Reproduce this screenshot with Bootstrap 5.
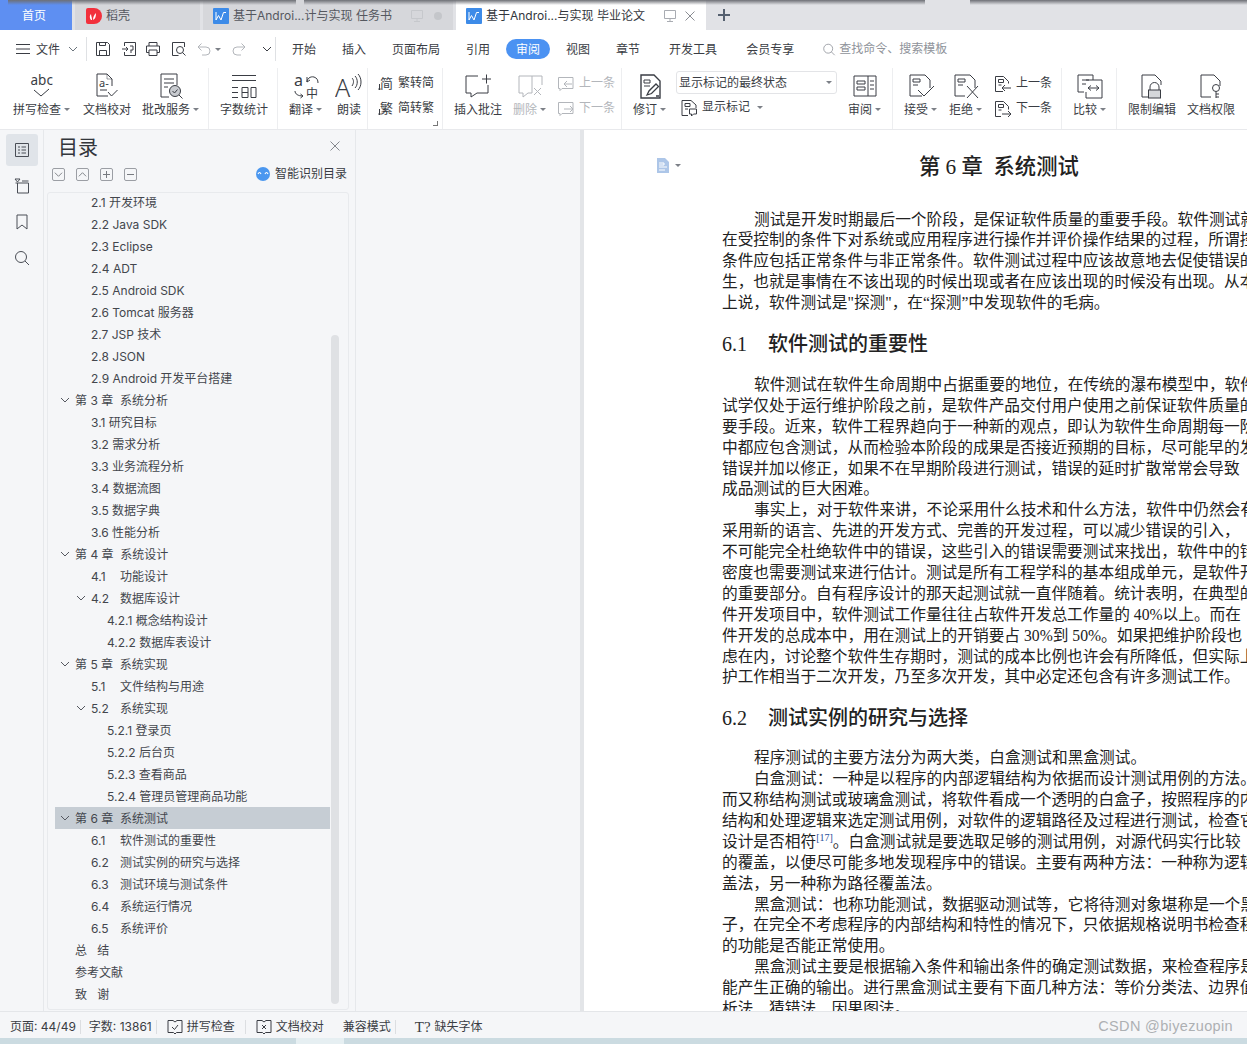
<!doctype html>
<html lang="zh-CN">
<head>
<meta charset="utf-8">
<title>WPS</title>
<link href="https://cdn.jsdelivr.net/npm/bootstrap@5.3.0/dist/css/bootstrap.min.css" rel="stylesheet">
<style>
html,body{height:1044px;overflow:hidden;margin:0}
body{width:1247px;font-family:"Inter","Noto Sans CJK SC",sans-serif;font-size:12px;color:#3a3d44;background:#f5f6f8;line-height:1.2}
svg{display:block;flex:none;fill:none;stroke:currentColor;stroke-width:1}
svg text{stroke:none;fill:currentColor;font-family:"Noto Sans","Noto Sans CJK SC",sans-serif}
.tabbar{height:30px;background:#e1e2e6;position:relative}
.tshade{position:absolute;top:0;height:5px;background:linear-gradient(#6e7076,rgba(110,112,118,0))}
.sh1{left:8px;width:288px}.sh2{left:304px;width:621px}.sh3{left:970px;width:277px}
.wtab{height:30px;flex:none;gap:4px;color:#55585f;background:#d6d7db;padding-left:10px;padding-top:2px}
.wtab.home{width:72px;background:#5e8ff2;color:#fff;padding-left:22px;margin-right:3px}
.wtab.shell{width:125px;padding-left:11px;margin-right:3px}
.wtab.docx{width:250px;margin-right:3px}
.wtab.on{background:#fff;color:#33363c}
.tname{width:161px;white-space:nowrap}
.tmon{margin-left:12px;color:#c6c8cc}
.wtab.on .tmon{color:#a9acb2}
.tx{margin-left:4px;color:#8a8d93}
.tdot{margin-left:6px;width:8px;height:8px;border-radius:50%;background:#c4c6ca}
.tplus{margin-left:9px;color:#55606f}
.menubar{height:38px;background:#fff;color:#3a3d44}
.mi{flex:none}
.vsep{width:1px;height:24px;background:#dfe1e4;flex:none}
.mtab{flex:none;line-height:20px;padding-top:2px}
.pill{width:44px;height:20px;border-radius:10px;background:#4b92f2;color:#fff;text-align:center;flex:none;line-height:21px}
.qsearch{color:#8f939a;padding-top:1px}
.qtext{padding-left:3px}
.ribbon{height:62px;background:#fff;border-bottom:1px solid #e8e9ec}
.rgrp{height:61px;border-right:1px solid #edeef0;flex:none;position:relative}
.g1{width:209px}.g2{width:69px}.g3{width:90px}.g4{width:75px}.g5{width:179px}.g6{width:271px}.g7{width:169px}.g8{width:55px}.g9{width:130px;border-right:0}
.ritem{flex:none;display:flex;flex-direction:column;align-items:center;height:61px}
.ritem svg{margin-top:5px;height:27px;width:28px}
.rlab{margin-top:2px;line-height:15px;white-space:nowrap;display:flex;align-items:center}
.caret{width:0;height:0;border-left:3px solid transparent;border-right:3px solid transparent;border-top:3px solid #7c8087;margin-left:3px;display:inline-block}
.off{color:#b3b6bb}
.rcol{flex:none;display:flex;flex-direction:column;padding-top:3px}
.rrow{height:25px;display:flex;align-items:center;gap:4px;white-space:nowrap}
.m3{margin-left:3px}.m6{margin-left:6px}.m8{margin-left:8px}.m9{margin-left:9px}.m10{margin-left:10px}.m11{margin-left:11px}.m12{margin-left:12px}.m13{margin-left:13px}.m15{margin-left:15px}
.launch{position:absolute;right:4px;bottom:3px;width:5px;height:5px;border-right:1px solid #777;border-bottom:1px solid #777}
.combo{width:161px;height:23px;border:1px solid #e3e4e7;border-radius:3px;padding-left:2px;margin-bottom:1px;line-height:21px;position:relative}
.combo .caret{position:absolute;right:4px;top:9px;margin:0}
.mainarea{height:881px}
.rail{width:44px;flex:none;border-right:1px solid #e6e8eb;padding-top:4px}
.rbtn{width:32px;height:32px;border-radius:3px;margin:0 auto 4px;display:flex;align-items:center;justify-content:center;color:#4a4e56}
.rbtn.on{background:#e0e4e9}
.tocpane{width:312px;flex:none;border-right:1px solid #e6e8eb;position:relative}
.tochead{height:37px;padding-left:14px;font-size:20px;line-height:36px;color:#33363c}
.tclose{left:286px;top:11px;color:#85888e}
.toctools{height:15px;margin-bottom:10px;padding-left:8px;gap:11px}
.tbtn{width:13px;height:13px;border:1px solid #9b9ea4;border-radius:2px;display:flex;align-items:center;justify-content:center;color:#777a80;flex:none}
.aiico{margin-left:auto;gap:5px;padding-right:8px;color:#3a3d44}
.tocbox{margin-left:3px;width:302px;height:818px;border:1px solid #e8eaed;border-radius:3px;position:relative;overflow:hidden}
.tocclip{margin-top:4px;height:810px;overflow:hidden;padding-left:7px}
.toclist{margin-top:-6px;width:275px}
.trow{height:22px;display:flex;align-items:center;white-space:nowrap;color:#43464d;padding-top:2px}
.trow.sel{background:#c6cdd4}
.l2{padding-left:36px}.l3{padding-left:52px}.l0{padding-left:20px}
.tog{width:20px;flex:none;display:flex;padding-left:5px;color:#555860;margin-top:-2px}
.tog2{padding-left:21px;width:36px}
.num{width:29px;flex:none}
.scrollb{position:absolute;left:283px;top:142px;width:8px;height:669px;border-radius:4px;background:#dfe1e4}
.gapzone{width:224px;flex:none;background:#f5f6f8}
.gut{width:4px;background:#e3e5e8;flex:none}
.page{width:663px;flex:none;background:#fff;overflow:hidden;padding-left:138px;position:relative;height:881px}
.docico{position:absolute;left:72px;top:28px;color:#adc6e8}
.docico .caret{position:absolute;left:19px;top:6px;margin:0}
.doct{font-family:"Liberation Serif","Noto Sans CJK SC",serif;color:#222}
.dtitle{height:30px;line-height:30px;margin-top:22px;margin-bottom:27.5px;font-size:21.3px;font-weight:500;padding-left:197px;white-space:pre;width:525px}
.dhead{height:30px;line-height:30px;font-size:20px;margin:15.5px 0;font-weight:500;white-space:nowrap;width:525px;display:flex}
.dhead.h2{margin-top:14.5px}
.hnum{width:46px;flex:none}
.dl{height:20.9px;line-height:20.9px;font-size:15.7px;white-space:nowrap;width:525px;overflow:hidden}
.dl.ind{padding-left:32px}
.refs{font-size:10px;vertical-align:6px;color:#1f4f9c;line-height:0}
.statusbar{height:27px;background:#f5f6f8;border-top:1px solid #e4e6e9;padding-left:10px;padding-top:4px;color:#3a3d44;position:relative}
.ssep{width:1px;height:14px;background:#dcdee1;flex:none}
.wmark{margin-left:auto;padding-right:14px;font-family:"Liberation Sans",sans-serif;font-size:14.5px;color:#adb0b3;letter-spacing:.35px}
.strip{height:6px;background:#cbdbe1;display:flex;padding-left:296px}
.strip i{display:block;width:48px;background:#e6eff2}
.menu-a{margin-left:16px}.menu-b{margin-left:26px}.menu-d{margin-left:16px}.menu-e{margin-left:29px}.menu-f{margin-left:28px}
.sb3{margin-left:19px}.sb4{margin-left:19px;font-size:15px;font-family:"Liberation Serif",serif}
</style>
</head>
<body>
<svg width="0" height="0" class="position-absolute">
<defs>
<symbol id="save" viewBox="0 0 16 16"><path d="M1.500 1.500h11l2 2v11h-13zM4.500 14.500v-5h7v5M4.500 1.500v3h6v-3"/></symbol>
<symbol id="share" viewBox="0 0 16 16"><path d="M3.500 5V1.500h11v13h-11V11M1 8h6M5 6l2 2-2 2M9 5h3v4H9.500M10 9v3"/></symbol>
<symbol id="print" viewBox="0 0 16 16"><path d="M4 5V1.500h8V5M4 11.500H1.500V5h13v6.500H12M4 9h8v5.500H4z"/></symbol>
<symbol id="prev" viewBox="0 0 16 16"><path d="M13.500 6V1.500h-12v13h6"/><circle cx="9" cy="9" r="3.500"/><path d="M11.500 11.500l3 3"/></symbol>
<symbol id="undo" viewBox="0 0 16 16"><path d="M2 6l3.500-3.500M2 6l3.500 3.500M2 6h8a4 4 0 0 1 0 8H6"/></symbol>
<symbol id="redo" viewBox="0 0 16 16"><path d="M14 6l-3.500-3.500M14 6l-3.500 3.500M14 6H6a4 4 0 0 0 0 8h4"/></symbol>
<symbol id="chev" viewBox="0 0 10 10"><path d="M1 3l4 4 4-4"/></symbol>
<symbol id="chevup" viewBox="0 0 10 10"><path d="M1 7l4-4 4 4"/></symbol>
<symbol id="x" viewBox="0 0 10 10"><path d="M.5.5l9 9M9.500.5l-9 9"/></symbol>
<symbol id="mon" viewBox="0 0 14 14"><path d="M1.500 1.500h11v8h-11zM7 9.500v3M4 12.500h6"/></symbol>
<symbol id="word" viewBox="0 0 16 16"><rect width="16" height="16" rx="1" fill="#3d8be8" stroke="none"/><path d="M3 4v8l2.500-4.500L8 12l2.500-7.500H13" stroke="#fff"/></symbol>
<symbol id="ricon" viewBox="0 0 16 16"><path d="M0 2a2 2 0 0 1 2-2h6a8 8 0 0 1 0 16H2a2 2 0 0 1-2-2z" fill="#f2303c" stroke="none"/><path d="M5 12c-2-3-1-5 0-6 0 2 1 3 1 6zM7 12c2-1 3-3 3-7-2 2-3 4-3 7z" fill="#fff" stroke="none"/></symbol>
<symbol id="abc" viewBox="0 0 28 27"><text x="2.500" y="12" font-size="13.500">abc</text><path d="M6 17l7 6 8-7"/></symbol>
<symbol id="dcheck" viewBox="0 0 28 27"><path d="M19 13V6l-5-5H4v22h11"/><path d="M14 1v5h5" opacity=".5"/><text x="6" y="14" font-size="11">a-</text><path d="M7 17h7M15 19l3.500 4 6-6"/></symbol>
<symbol id="review" viewBox="0 0 28 27"><path d="M12 24H4V1h16v11M7 6h10M7 10h10M7 14h4"/><circle cx="18" cy="18" r="5.500" fill="#c8cbd0"/><path d="M15.500 18l2 2 3-3.500M22 22l3.500 3.500"/></symbol>
<symbol id="count" viewBox="0 0 28 27"><path d="M2 2.500h24M2 7.500h24M2 14.500h6M2 19.500h6M2 24.500h6M12 14.500h6v10h-6zM12 19.500h6M21 14.500h5v10h-5z"/></symbol>
<symbol id="trans" viewBox="0 0 28 27"><text x="2" y="13" font-size="16">a</text><text x="14" y="25" font-size="12">中</text><path d="M15 9c0-3 3-6 7-5 3 1 4 3 4 6M15 4v5M15 9l3-2M3 18c0 3 3 5 8 5M11 23l-2.500-2M11 23l-2.500 2"/></symbol>
<symbol id="read" viewBox="0 0 28 27"><text x="0" y="24" font-size="25" font-weight="300">A</text><path d="M17 5c2 2 2 5 0 8M20 3c3 3 3 9 0 12M23 1c4 4 4 12 0 16"/></symbol>
<symbol id="fan" viewBox="0 0 16 17"><text x="2" y="13" font-size="13">简</text><path d="M1.500 9v6M.200 13.500l1.300 1.500 1.300-1.500"/></symbol>
<symbol id="jian" viewBox="0 0 16 17"><text x="2" y="13" font-size="13">繁</text><path d="M1.500 9v6M.200 13.500l1.300 1.500 1.300-1.500"/></symbol>
<symbol id="cmt" viewBox="0 0 28 27"><path d="M14 3H2v17h5v4l6-4h11v-8M18 6h9M22.500 1.500v9"/></symbol>
<symbol id="cdel" viewBox="0 0 28 27"><path d="M26 3H3v17h4v4l5-4h4V3M26 3v9M18 15l7 7M25 15l-7 7"/></symbol>
<symbol id="cup" viewBox="0 0 18 16"><path d="M7 1.500h9v11H5l-2 2v-2H1.500v-11H7M15 8H7M7 8l3-3M7 8l3 3"/></symbol>
<symbol id="cdn" viewBox="0 0 18 16"><path d="M7 1.500h9v11H5l-2 2v-2H1.500v-11H7M7 8h9M16 8l-3-3M16 8l-3 3"/></symbol>
<symbol id="track" viewBox="0 0 28 27"><path d="M5 2h13l6 6v17H5z" stroke-width="1.400"/><path d="M8 7h6v3H8zM8 13h6" /><path d="M11 22l2-4 7-7 2.500 2.500-7 7zM20 23h3" stroke-width="1.300"/></symbol>
<symbol id="show" viewBox="0 0 18 18"><path d="M11 1.500H2v15h6M11 1.500L16 6v3M5 4.500h5v3H5zM5 10h3"/><path d="M9.500 10h7v5h-3l-2 2v-2h-2z"/></symbol>
<symbol id="pane" viewBox="0 0 28 27"><path d="M3 3h22v20H3zM17 3v20M6 8h8v3H6zM6 14h8v3H6zM19 8h4M19 12h4M19 16h4"/></symbol>
<symbol id="acc" viewBox="0 0 28 27"><path d="M15 23H3V2h15l5 5v8M6 6h7v3H6zM6 12h5"/><path d="M11 17l6 6 10-10"/></symbol>
<symbol id="rej" viewBox="0 0 28 27"><path d="M13 23H3V2h15l5 5v8M6 6h7v3H6zM6 12h5"/><path d="M15 13l11 12M26 13L15 25"/></symbol>
<symbol id="dup" viewBox="0 0 18 18"><path d="M9 16.500H1.500v-15h8l5 5v2M4.500 4.500h5v3h-5zM4.500 10h3M8 13h9M8 13l3-3M8 13l3 3"/></symbol>
<symbol id="ddn" viewBox="0 0 18 18"><path d="M7 16.500H1.500v-15h8l5 5v3M4.500 4.500h5v3h-5zM4.500 10h3M8 14h9M17 14l-3-3M17 14l-3 3"/></symbol>
<symbol id="cmp" viewBox="0 0 28 27"><path d="M17 7V2H2v17h6M6 7h7M6 11h4M10 7h16v18H10V19"/><path d="M12 15h11M12 15l3-2.500M12 15l3 2.500M23 15l-3-2.500M23 15l-3 2.500"/></symbol>
<symbol id="lock" viewBox="0 0 28 27"><path d="M11 24H4V2h13l6 6v4"/><path d="M12 17v-3a4.500 4.500 0 0 1 9 0v3"/><rect x="10.500" y="17" width="12" height="8" fill="#d5d7da"/></symbol>
<symbol id="key" viewBox="0 0 28 27"><path d="M14 24H4V2h13l6 6v5"/><circle cx="19" cy="15" r="3.500"/><path d="M19 18.500V25M19 21h3M19 24h3"/></symbol>
<symbol id="rtoc" viewBox="0 0 16 16"><path d="M1.500 1.500h13v13h-13zM4 5h2M4 8h2M4 11h2M7.500 5h4.500M7.500 8h4.500M7.500 11h4.500"/></symbol>
<symbol id="rnav" viewBox="0 0 16 16"><path d="M1.500 5h13v10h-11V5M1 1h5L3.500 4z"/><path d="M8 3h6.500"/></symbol>
<symbol id="rbm" viewBox="0 0 16 16"><path d="M3 1h10v14l-5-4-5 4z"/></symbol>
<symbol id="rsr" viewBox="0 0 16 16"><circle cx="7" cy="7" r="5.500"/><path d="M11 11l4 4"/></symbol>
<symbol id="menu" viewBox="0 0 14 12"><path d="M0 1.500h14M0 6h14M0 10.500h14"/></symbol>
<symbol id="ai" viewBox="0 0 14 14"><circle cx="7" cy="7" r="7" fill="#4b97ef" stroke="none"/><path d="M2 7c1-2 2-2 3 0M9 7c1-2 2-2 3 0" stroke="#fff" stroke-width="1.200"/></symbol>
<symbol id="spell" viewBox="0 0 16 16"><path d="M1 1.500h5l2 1.500 2-1.500h5v12H9.500L8 15l-1.500-1.500H1zM5 8l2.500 2.500L11 6"/></symbol>
<symbol id="proof" viewBox="0 0 16 16"><path d="M1 1.500h5l2 1.500 2-1.500h5v12H9.500L8 15l-1.500-1.500H1zM6 6l4 4M10 6l-4 4"/></symbol>
<symbol id="fdoc" viewBox="0 0 14 15"><path d="M1 0h8l4 4v11H1z" fill="currentColor" stroke="none"/><path d="M3 5h5v2H3M3 9h8M3 12h6" stroke="#fff"/></symbol>
</defs>
</svg>

<div class="tabbar d-flex">
  <div class="wtab home d-flex align-items-center">首页</div>
  <div class="wtab shell d-flex align-items-center"><svg width="16" height="16"><use href="#ricon"/></svg>稻壳</div>
  <div class="wtab docx d-flex align-items-center"><svg width="16" height="16"><use href="#word"/></svg><span class="tname">基于Androi...计与实现 任务书</span><svg class="tmon" width="14" height="14"><use href="#mon"/></svg><span class="tdot"></span></div>
  <div class="wtab docx on d-flex align-items-center"><svg width="16" height="16"><use href="#word"/></svg><span class="tname">基于Androi...与实现 毕业论文</span><svg class="tmon" width="14" height="14"><use href="#mon"/></svg><svg class="tx" width="10" height="10"><use href="#x"/></svg></div>
  <svg class="tplus align-self-center" width="12" height="12" viewBox="0 0 12 12"><path d="M0 6h12M6 0v12" stroke-width="2"/></svg>
  <span class="tshade sh1"></span><span class="tshade sh2"></span><span class="tshade sh3"></span>
</div>

<div class="menubar d-flex align-items-center">
  <svg class="mi ms-3" width="14" height="12"><use href="#menu"/></svg>
  <span class="mtab m6 me-2">文件</span>
  <svg class="mi text-secondary" width="10" height="10"><use href="#chev"/></svg>
  <div class="vsep ms-2"></div>
  <svg class="mi m8" width="16" height="16"><use href="#save"/></svg>
  <svg class="mi m10" width="16" height="16"><use href="#share"/></svg>
  <svg class="mi m8" width="16" height="16"><use href="#print"/></svg>
  <svg class="mi m10" width="16" height="16"><use href="#prev"/></svg>
  <svg class="mi m9 off" width="16" height="16"><use href="#undo"/></svg>
  <i class="caret"></i>
  <svg class="mi m10 off" width="16" height="16"><use href="#redo"/></svg>
  <svg class="mi m15" width="10" height="10"><use href="#chev"/></svg>
  <div class="vsep m3"></div>
  <span class="mtab menu-a">开始</span>
  <span class="mtab menu-b">插入</span>
  <span class="mtab menu-b">页面布局</span>
  <span class="mtab menu-b">引用</span>
  <span class="pill menu-d">审阅</span>
  <span class="mtab menu-d">视图</span>
  <span class="mtab menu-b">章节</span>
  <span class="mtab menu-e">开发工具</span>
  <span class="mtab menu-e">会员专享</span>
  <svg class="mi menu-f qsearch" width="14" height="14"><use href="#rsr"/></svg>
  <span class="qsearch qtext">查找命令、搜索模板</span>
</div>

<div class="ribbon d-flex">
  <div class="rgrp g1 d-flex">
    <div class="ritem m13"><svg><use href="#abc"/></svg><div class="rlab">拼写检查<i class="caret"></i></div></div>
    <div class="ritem m13"><svg><use href="#dcheck"/></svg><div class="rlab">文档校对</div></div>
    <div class="ritem m11"><svg><use href="#review"/></svg><div class="rlab">批改服务<i class="caret"></i></div></div>
  </div>
  <div class="rgrp g2 d-flex">
    <div class="ritem m11"><svg><use href="#count"/></svg><div class="rlab">字数统计</div></div>
  </div>
  <div class="rgrp g3 d-flex">
    <div class="ritem m11"><svg><use href="#trans"/></svg><div class="rlab">翻译<i class="caret"></i></div></div>
    <div class="ritem m13"><svg><use href="#read"/></svg><div class="rlab">朗读</div></div>
  </div>
  <div class="rgrp g4 d-flex">
    <div class="rcol m10">
      <div class="rrow"><svg width="16" height="17"><use href="#fan"/></svg>繁转简</div>
      <div class="rrow"><svg width="16" height="17"><use href="#jian"/></svg>简转繁</div>
    </div>
    <span class="launch"></span>
  </div>
  <div class="rgrp g5 d-flex">
    <div class="ritem m11"><svg><use href="#cmt"/></svg><div class="rlab">插入批注</div></div>
    <div class="ritem m11 off"><svg><use href="#cdel"/></svg><div class="rlab">删除<i class="caret"></i></div></div>
    <div class="rcol m11 off">
      <div class="rrow"><svg width="18" height="16"><use href="#cup"/></svg>上一条</div>
      <div class="rrow"><svg width="18" height="16"><use href="#cdn"/></svg>下一条</div>
    </div>
  </div>
  <div class="rgrp g6 d-flex">
    <div class="ritem m11"><svg><use href="#track"/></svg><div class="rlab">修订<i class="caret"></i></div></div>
    <div class="rcol m10">
      <div class="combo">显示标记的最终状态<i class="caret"></i></div>
      <div class="rrow ms-1"><svg width="18" height="18"><use href="#show"/></svg>显示标记<i class="caret"></i></div>
    </div>
    <div class="ritem m11"><svg><use href="#pane"/></svg><div class="rlab">审阅<i class="caret"></i></div></div>
  </div>
  <div class="rgrp g7 d-flex">
    <div class="ritem m11"><svg><use href="#acc"/></svg><div class="rlab">接受<i class="caret"></i></div></div>
    <div class="ritem m12"><svg><use href="#rej"/></svg><div class="rlab">拒绝<i class="caret"></i></div></div>
    <div class="rcol m12">
      <div class="rrow"><svg width="18" height="18"><use href="#dup"/></svg>上一条</div>
      <div class="rrow"><svg width="18" height="18"><use href="#ddn"/></svg>下一条</div>
    </div>
  </div>
  <div class="rgrp g8 d-flex">
    <div class="ritem m11"><svg><use href="#cmp"/></svg><div class="rlab">比较<i class="caret"></i></div></div>
  </div>
  <div class="rgrp g9 d-flex">
    <div class="ritem m11"><svg><use href="#lock"/></svg><div class="rlab">限制编辑</div></div>
    <div class="ritem m11"><svg><use href="#key"/></svg><div class="rlab">文档权限</div></div>
  </div>
</div>

<div class="mainarea d-flex">
  <div class="rail">
    <div class="rbtn on"><svg width="16" height="16"><use href="#rtoc"/></svg></div>
    <div class="rbtn"><svg width="16" height="16"><use href="#rnav"/></svg></div>
    <div class="rbtn"><svg width="16" height="16"><use href="#rbm"/></svg></div>
    <div class="rbtn"><svg width="16" height="16"><use href="#rsr"/></svg></div>
  </div>
  <div class="tocpane">
    <div class="tochead">目录</div>
    <svg class="tclose position-absolute" width="10" height="10"><use href="#x"/></svg>
    <div class="toctools d-flex align-items-center">
      <span class="tbtn"><svg width="9" height="9"><use href="#chev"/></svg></span>
      <span class="tbtn"><svg width="9" height="9"><use href="#chevup"/></svg></span>
      <span class="tbtn"><svg width="7" height="7" viewBox="0 0 7 7"><path d="M0 3.500h7M3.500 0v7"/></svg></span>
      <span class="tbtn"><svg width="7" height="7" viewBox="0 0 7 7"><path d="M0 3.500h7"/></svg></span>
      <span class="aiico d-flex align-items-center"><svg width="14" height="14"><use href="#ai"/></svg>智能识别目录</span>
    </div>
    <div class="tocbox">
      <div class="tocclip"><div class="toclist">
        <div class="trow l2">2.1 开发环境</div>
        <div class="trow l2">2.2 Java SDK</div>
        <div class="trow l2">2.3 Eclipse</div>
        <div class="trow l2">2.4 ADT</div>
        <div class="trow l2">2.5 Android SDK</div>
        <div class="trow l2">2.6 Tomcat 服务器</div>
        <div class="trow l2">2.7 JSP 技术</div>
        <div class="trow l2">2.8 JSON</div>
        <div class="trow l2">2.9 Android 开发平台搭建</div>
        <div class="trow"><span class="tog"><svg width="10" height="10"><use href="#chev"/></svg></span>第 3 章&nbsp; 系统分析</div>
        <div class="trow l2">3.1 研究目标</div>
        <div class="trow l2">3.2 需求分析</div>
        <div class="trow l2">3.3 业务流程分析</div>
        <div class="trow l2">3.4 数据流图</div>
        <div class="trow l2">3.5 数据字典</div>
        <div class="trow l2">3.6 性能分析</div>
        <div class="trow"><span class="tog"><svg width="10" height="10"><use href="#chev"/></svg></span>第 4 章&nbsp; 系统设计</div>
        <div class="trow l2"><span class="num">4.1</span>功能设计</div>
        <div class="trow"><span class="tog tog2"><svg width="10" height="10"><use href="#chev"/></svg></span><span class="num">4.2</span>数据库设计</div>
        <div class="trow l3">4.2.1 概念结构设计</div>
        <div class="trow l3">4.2.2 数据库表设计</div>
        <div class="trow"><span class="tog"><svg width="10" height="10"><use href="#chev"/></svg></span>第 5 章&nbsp; 系统实现</div>
        <div class="trow l2"><span class="num">5.1</span>文件结构与用途</div>
        <div class="trow"><span class="tog tog2"><svg width="10" height="10"><use href="#chev"/></svg></span><span class="num">5.2</span>系统实现</div>
        <div class="trow l3">5.2.1 登录页</div>
        <div class="trow l3">5.2.2 后台页</div>
        <div class="trow l3">5.2.3 查看商品</div>
        <div class="trow l3">5.2.4 管理员管理商品功能</div>
        <div class="trow sel"><span class="tog"><svg width="10" height="10"><use href="#chev"/></svg></span>第 6 章&nbsp; 系统测试</div>
        <div class="trow l2"><span class="num">6.1</span>软件测试的重要性</div>
        <div class="trow l2"><span class="num">6.2</span>测试实例的研究与选择</div>
        <div class="trow l2"><span class="num">6.3</span>测试环境与测试条件</div>
        <div class="trow l2"><span class="num">6.4</span>系统运行情况</div>
        <div class="trow l2"><span class="num">6.5</span>系统评价</div>
        <div class="trow l0">总&nbsp;&nbsp; 结</div>
        <div class="trow l0">参考文献</div>
        <div class="trow l0">致&nbsp;&nbsp; 谢</div>
      </div></div>
      <div class="scrollb"></div>
    </div>
  </div>
  <div class="gapzone"></div>
  <div class="gut"></div>
  <div class="page doct">
    <div class="docico"><svg width="14" height="15"><use href="#fdoc"/></svg><i class="caret"></i></div>
    <div class="dtitle">第 6 章  系统测试</div>
    <div class="dl ind">测试是开发时期最后一个阶段，是保证软件质量的重要手段。软件测试就</div>
    <div class="dl">在受控制的条件下对系统或应用程序进行操作并评价操作结果的过程，所谓控</div>
    <div class="dl">条件应包括正常条件与非正常条件。软件测试过程中应该故意地去促使错误的</div>
    <div class="dl">生，也就是事情在不该出现的时候出现或者在应该出现的时候没有出现。从本</div>
    <div class="dl">上说，软件测试是"探测"，在“探测”中发现软件的毛病。</div>
    <div class="dhead"><span class="hnum">6.1</span>软件测试的重要性</div>
    <div class="dl ind">软件测试在软件生命周期中占据重要的地位，在传统的瀑布模型中，软件</div>
    <div class="dl">试学仅处于运行维护阶段之前，是软件产品交付用户使用之前保证软件质量的</div>
    <div class="dl">要手段。近来，软件工程界趋向于一种新的观点，即认为软件生命周期每一阶</div>
    <div class="dl">中都应包含测试，从而检验本阶段的成果是否接近预期的目标，尽可能早的发</div>
    <div class="dl">错误并加以修正，如果不在早期阶段进行测试，错误的延时扩散常常会导致</div>
    <div class="dl">成品测试的巨大困难。</div>
    <div class="dl ind">事实上，对于软件来讲，不论采用什么技术和什么方法，软件中仍然会有</div>
    <div class="dl">采用新的语言、先进的开发方式、完善的开发过程，可以减少错误的引入，</div>
    <div class="dl">不可能完全杜绝软件中的错误，这些引入的错误需要测试来找出，软件中的错</div>
    <div class="dl">密度也需要测试来进行估计。测试是所有工程学科的基本组成单元，是软件开</div>
    <div class="dl">的重要部分。自有程序设计的那天起测试就一直伴随着。统计表明，在典型的</div>
    <div class="dl">件开发项目中，软件测试工作量往往占软件开发总工作量的 40%以上。而在</div>
    <div class="dl">件开发的总成本中，用在测试上的开销要占 30%到 50%。如果把维护阶段也</div>
    <div class="dl">虑在内，讨论整个软件生存期时，测试的成本比例也许会有所降低，但实际上</div>
    <div class="dl">护工作相当于二次开发，乃至多次开发，其中必定还包含有许多测试工作。</div>
    <div class="dhead h2"><span class="hnum">6.2</span>测试实例的研究与选择</div>
    <div class="dl ind">程序测试的主要方法分为两大类，白盒测试和黑盒测试。</div>
    <div class="dl ind">白盒测试：一种是以程序的内部逻辑结构为依据而设计测试用例的方法。</div>
    <div class="dl">而又称结构测试或玻璃盒测试，将软件看成一个透明的白盒子，按照程序的内</div>
    <div class="dl">结构和处理逻辑来选定测试用例，对软件的逻辑路径及过程进行测试，检查它</div>
    <div class="dl">设计是否相符<span class="refs">[17]</span>。白盒测试就是要选取足够的测试用例，对源代码实行比较</div>
    <div class="dl">的覆盖，以便尽可能多地发现程序中的错误。主要有两种方法：一种称为逻辑</div>
    <div class="dl">盖法，另一种称为路径覆盖法。</div>
    <div class="dl ind">黑盒测试：也称功能测试，数据驱动测试等，它将待测对象堪称是一个黑</div>
    <div class="dl">子，在完全不考虑程序的内部结构和特性的情况下，只依据规格说明书检查程</div>
    <div class="dl">的功能是否能正常使用。</div>
    <div class="dl ind">黑盒测试主要是根据输入条件和输出条件的确定测试数据，来检查程序是</div>
    <div class="dl">能产生正确的输出。进行黑盒测试主要有下面几种方法：等价分类法、边界值</div>
    <div class="dl">析法、猜错法、因果图法。</div>
  </div>
</div>

<div class="statusbar d-flex align-items-center">
  <span>页面: 44/49</span><span class="ssep ms-1 me-2"></span>
  <span>字数: 13861</span><span class="ssep ms-1"></span>
  <svg class="m10" width="16" height="16"><use href="#spell"/></svg><span class="ms-1">拼写检查</span><span class="ssep m10"></span>
  <svg class="m10" width="16" height="16"><use href="#proof"/></svg><span class="ms-1">文档校对</span>
  <span class="sb3">兼容模式</span><span class="ssep ms-1"></span>
  <span class="sb4">T?</span><span class="ms-1">缺失字体</span>
  <span class="wmark">CSDN @biyezuopin</span>
</div>
<div class="strip"><i></i></div>
<script src="https://cdn.jsdelivr.net/npm/bootstrap@5.3.0/dist/js/bootstrap.bundle.min.js"></script>
</body>
</html>
